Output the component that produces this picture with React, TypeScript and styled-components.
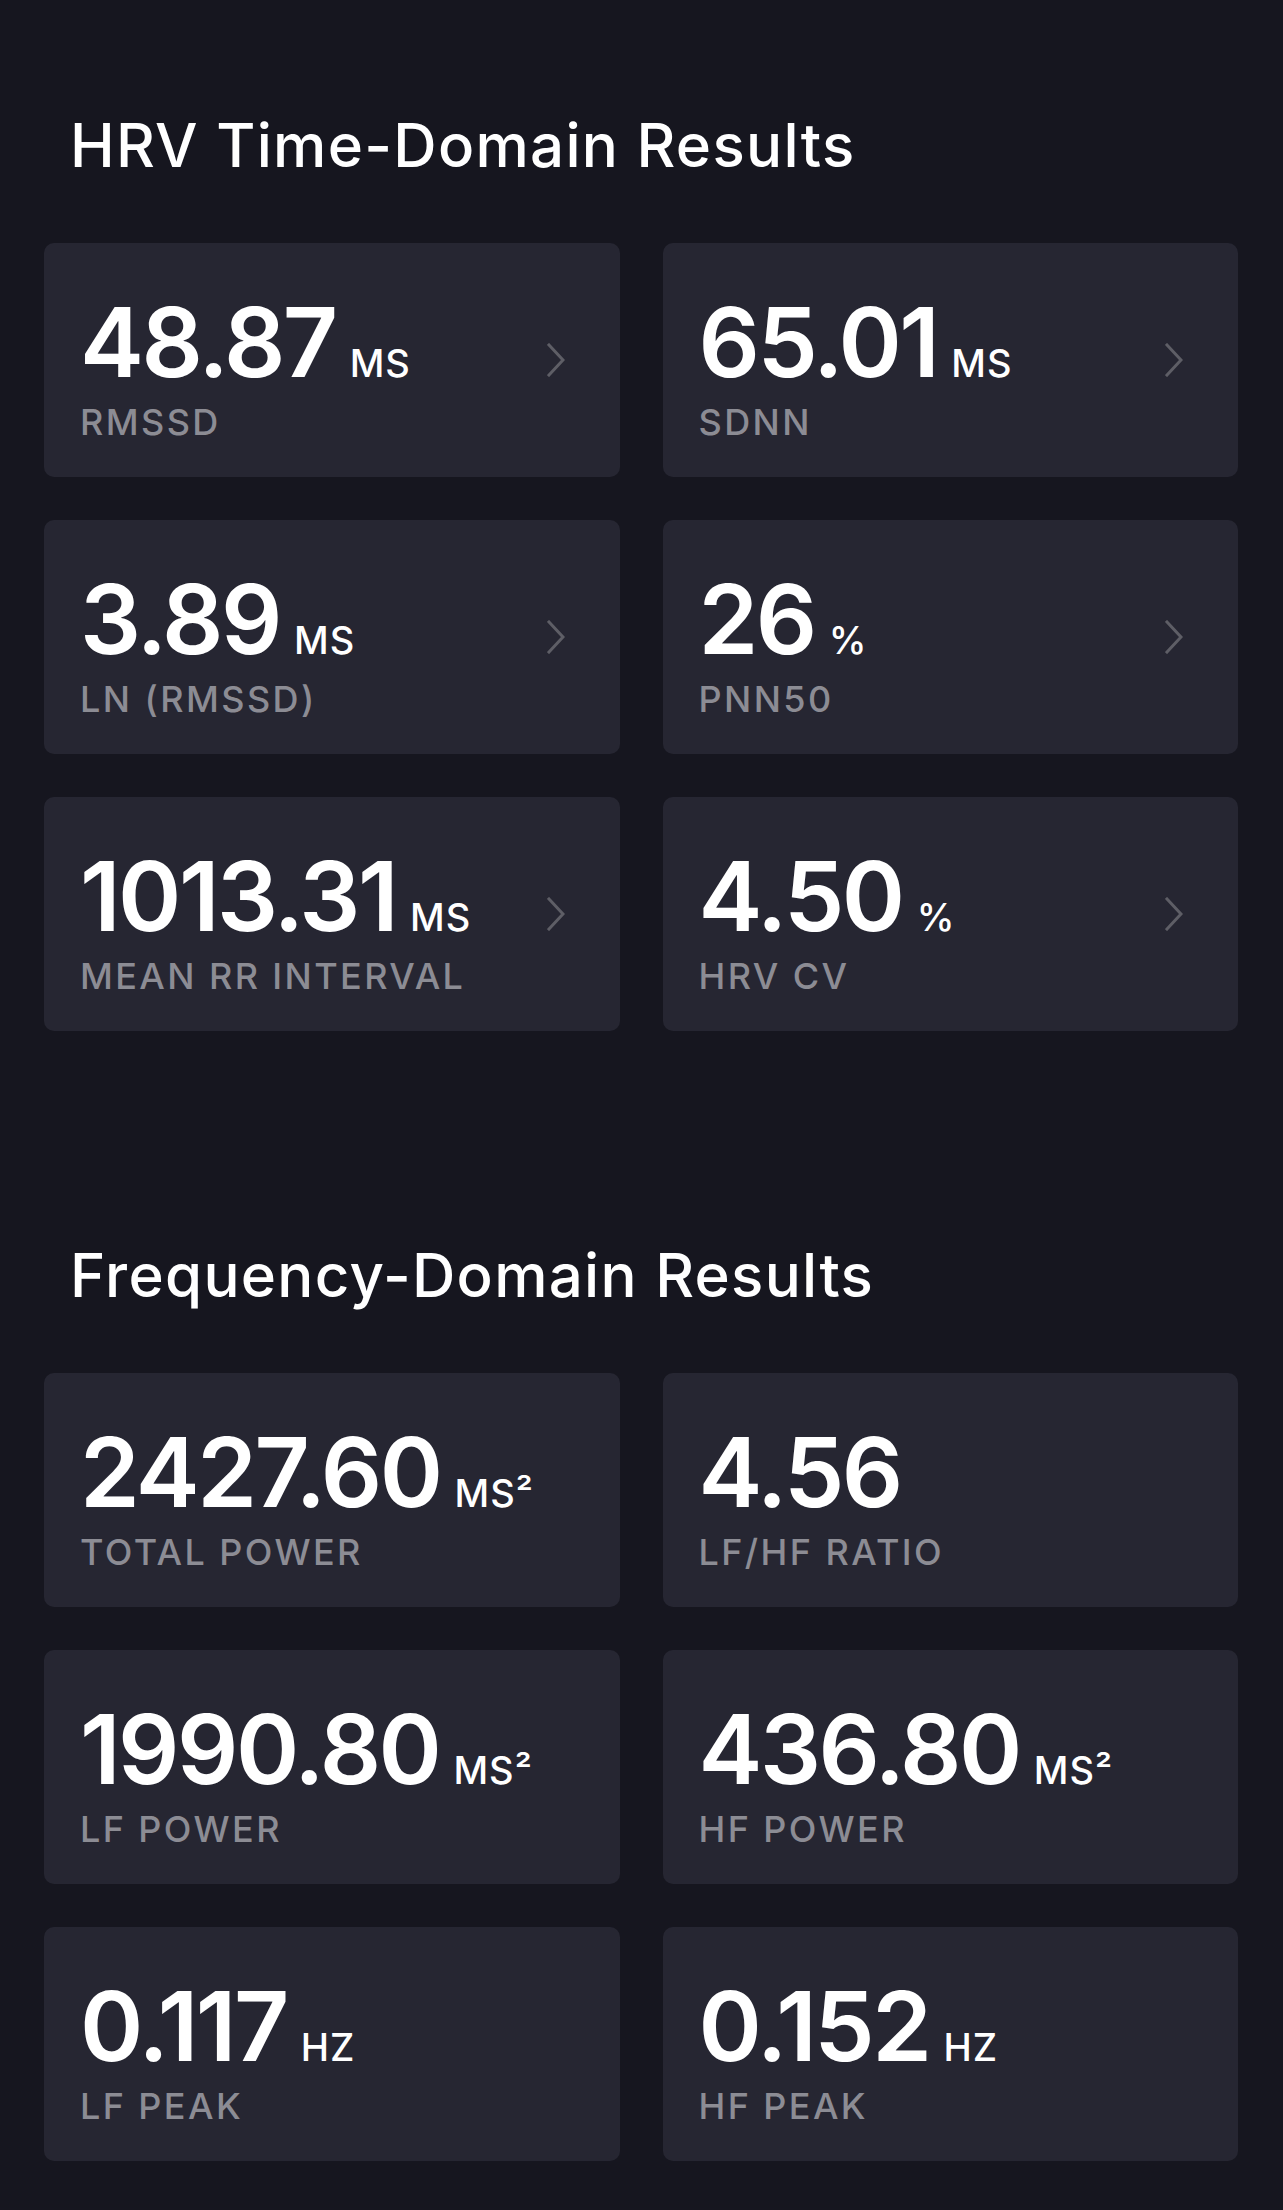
import React from "react";
import styled, { createGlobalStyle } from "styled-components";

interface Metric {
  value: string;
  unit?: string;
  label: string;
}

const timeDomain: Metric[] = [
  { value: "48.87", unit: "MS", label: "RMSSD" },
  { value: "65.01", unit: "MS", label: "SDNN" },
  { value: "3.89", unit: "MS", label: "LN (RMSSD)" },
  { value: "26", unit: "%", label: "PNN50" },
  { value: "1013.31", unit: "MS", label: "MEAN RR INTERVAL" },
  { value: "4.50", unit: "%", label: "HRV CV" },
];

const freqDomain: Metric[] = [
  { value: "2427.60", unit: "MS²", label: "TOTAL POWER" },
  { value: "4.56", label: "LF/HF RATIO" },
  { value: "1990.80", unit: "MS²", label: "LF POWER" },
  { value: "436.80", unit: "MS²", label: "HF POWER" },
  { value: "0.117", unit: "HZ", label: "LF PEAK" },
  { value: "0.152", unit: "HZ", label: "HF PEAK" },
];

const Chevron = () => (
  <ChevronBox>
    <svg width="18" height="34" viewBox="0 0 18 34" fill="none">
      <polyline
        points="2,2 16,17 2,32"
        stroke="#5e5e66"
        strokeWidth="3"
        strokeLinecap="square"
        strokeLinejoin="miter"
      />
    </svg>
  </ChevronBox>
);

const MetricCard = ({ m, arrow }: { m: Metric; arrow?: boolean }) => (
  <Card>
    <Info>
      <ValueRow>
        <Value>{m.value}</Value>
        {m.unit && <Unit>{m.unit}</Unit>}
      </ValueRow>
      <Label>{m.label}</Label>
    </Info>
    {arrow && <Chevron />}
  </Card>
);

const App = () => {
  return (
    <>
      <GlobalStyle />
      <Page>
        <Section>
          <Title>HRV Time-Domain Results</Title>
          <Grid>
            {timeDomain.map((m) => (
              <MetricCard key={m.label} m={m} arrow />
            ))}
          </Grid>
        </Section>
        <Section>
          <Title>Frequency-Domain Results</Title>
          <Grid>
            {freqDomain.map((m) => (
              <MetricCard key={m.label} m={m} />
            ))}
          </Grid>
        </Section>
      </Page>
    </>
  );
};

const GlobalStyle = createGlobalStyle`
  html, body {
    margin: 0;
    background: #16161f;
  }
  body {
    font-family: Inter, "Noto Sans", sans-serif;
    color: #ffffff;
  }
`;

const Page = styled.div`
  min-height: 2210px;
  box-sizing: border-box;
  padding: 109px 45px 48px 44px;
  display: flex;
  flex-direction: column;
  gap: 208px;
`;
const Section = styled.section`
  display: flex;
  flex-direction: column;
`;
const Title = styled.h2`
  margin: 0 0 62px 26px;
  font-size: 60px;
  line-height: 72px;
  font-weight: 500;
  letter-spacing: 1.3px;
  color: #ffffff;
`;
const Grid = styled.div`
  display: grid;
  grid-template-columns: 1fr 1fr;
  column-gap: 43px;
  row-gap: 43px;
`;
const Card = styled.div`
  height: 234px;
  box-sizing: border-box;
  background: #262632;
  border-radius: 10px;
  padding: 0 55px 0 36px;
  display: flex;
  align-items: center;
  justify-content: space-between;
`;
const Info = styled.div`
  display: flex;
  flex-direction: column;
  padding-top: 14px;
`;
const ValueRow = styled.div`
  display: flex;
  align-items: baseline;
  gap: 14px;
`;
const Value = styled.span`
  font-size: 96px;
  line-height: 96px;
  font-weight: 600;
  letter-spacing: -2.5px;
  color: #ffffff;
`;
const Unit = styled.span`
  font-size: 38px;
  font-weight: 500;
  letter-spacing: 1px;
  color: #ffffff;
`;
const Label = styled.span`
  margin-top: 14px;
  font-size: 36px;
  line-height: 36px;
  font-weight: 500;
  letter-spacing: 2.4px;
  color: #8c8c94;
`;
const ChevronBox = styled.div`
  display: flex;
  align-items: center;
`;

export default App;
